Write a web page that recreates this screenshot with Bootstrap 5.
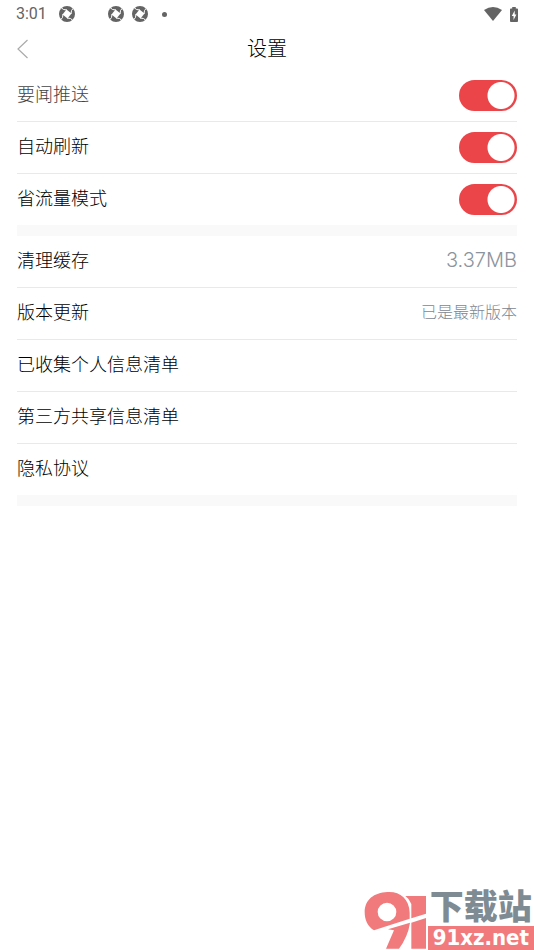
<!DOCTYPE html>
<html lang="zh-CN">
<head>
<meta charset="utf-8">
<meta name="viewport" content="width=device-width, initial-scale=1">
<title>设置</title>
<link href="https://cdn.jsdelivr.net/npm/bootstrap@5.3.0/dist/css/bootstrap.min.css" rel="stylesheet">
<style>
body { font-family: "Noto Sans CJK SC", sans-serif; font-weight: 300; color: #000; background: #fff; }
.page-pad { padding-left: 17px; padding-right: 17px; }
.status-bar { height: 28px; color: #646464; font: 400 16px/28px Roboto, sans-serif; padding: 0 16px; }
.status-bar svg { display: block; }
.notice-first { margin: 0 33px 0 12px; }
.status-dot { width: 5px; height: 5px; border-radius: 50%; background: #646464; margin-left: 14px; }
.title-bar { height: 42px; display: grid; grid-template-columns: 1fr auto 1fr; align-items: center; }
.title-bar h1 { font-size: 20px; line-height: 30px; font-weight: 300; margin: 0; padding-bottom: 2px; color: #000; }
.back-link svg { display: block; }
.setting-row { height: 52px; font-size: 18px; line-height: 28px; border-bottom: 1px solid #e9e9e9; }
.setting-row:last-child { border-bottom: 0; height: 51px; }
.setting-row > label, .setting-row > span { padding-bottom: 6px; }
.setting-row > .size-value { padding-bottom: 4px; }
.setting-group { border-bottom: 11px solid #f9f9f9; margin: 0; padding: 0; }
.row-link { color: #000; }
.muted-label { color: #444; }
.size-value { font: 300 20px/28px Inter, "Liberation Sans", sans-serif; color: #8b949e; }
.version-value { font-size: 16px; color: #7d8791; }
.form-check-input.toggle { width: 58px; height: 31px; margin: 0; border: 0; border-radius: 16px; background-color: #ccc; background-image: radial-gradient(circle at 16px 50%, #fff 13px, transparent 14px); background-position: 0 0; background-size: 100% 100%; }
.form-check-input.toggle:checked { background-color: #eb4549; background-image: radial-gradient(circle at 42px 50%, #fff 13px, transparent 14px); background-position: 0 0; }
.brand-name { font-size: 34px; line-height: 34px; padding-bottom: 4px; font-weight: 900; color: #7e8b93; }
.brand-site { background: #f17a7c; color: #fff; font: 700 22px/24px "DejaVu Sans Condensed", "DejaVu Sans Mono", sans-serif; padding: 0 5px; }
</style>
<script src="https://cdn.jsdelivr.net/npm/bootstrap@5.3.0/dist/js/bootstrap.bundle.min.js"></script>
</head>
<body class="min-vh-100 d-flex flex-column">
<svg class="d-none" aria-hidden="true">
  <symbol id="shutter" viewBox="0 0 16 16">
    <circle cx="8" cy="8" r="8" fill="#646464"/>
    <path d="M7.500 3.500 12.500 7.500 8.500 12.500 3.500 8.500Z" fill="#fff"/>
    <path d="M8 4 4.500 3.500 2 1.500M12 8 12.500 4.500 14.500 2M8 12 11.500 12.500 14 14.500M4 8 3.500 11.500 1.500 14" fill="none" stroke="#fff" stroke-width="1"/>
  </symbol>
</svg>
<header>
  <div class="status-bar d-flex align-items-center">
    <span>3:01</span>
    <svg class="notice-first" width="16" height="16"><use href="#shutter"/></svg>
    <svg width="16" height="16"><use href="#shutter"/></svg>
    <svg class="ms-2" width="16" height="16"><use href="#shutter"/></svg>
    <span class="status-dot"></span>
    <svg class="ms-auto" width="18" height="14" viewBox="0 0 18 14"><path d="M0 3Q9-3 18 3L9 14Z" fill="#646464"/></svg>
    <svg class="ms-2" width="8" height="15" viewBox="0 0 9 15" preserveAspectRatio="none"><path d="M2.500 1.500V0h4v1.500H8q1 0 1 1V14q0 1-1 1H1q-1 0-1-1V2.500q0-1 1-1Z" fill="#646464"/><path d="M5.300 3.500 2 9h2v4l3.200-5.500H5.300Z" fill="#fff"/></svg>
  </div>
  <div class="title-bar page-pad">
    <a href="#" class="back-link" aria-label="返回"><svg width="12" height="20" viewBox="0 0 12 20"><path d="M10.500 1 1 10l9.500 9" fill="none" stroke="#aaa" stroke-width="1.200"/></svg></a>
    <h1>设置</h1>
  </div>
</header>
<main class="page-pad">
  <div class="setting-group">
    <div class="setting-row d-flex align-items-center justify-content-between"><label class="muted-label" for="push">要闻推送</label><input class="form-check-input toggle" type="checkbox" role="switch" id="push" checked></div>
    <div class="setting-row d-flex align-items-center justify-content-between"><label for="refresh">自动刷新</label><input class="form-check-input toggle" type="checkbox" role="switch" id="refresh" checked></div>
    <div class="setting-row d-flex align-items-center justify-content-between"><label for="saver">省流量模式</label><input class="form-check-input toggle" type="checkbox" role="switch" id="saver" checked></div>
  </div>
  <div class="setting-group">
    <a href="#" class="setting-row row-link text-decoration-none d-flex align-items-center justify-content-between"><span>清理缓存</span><span class="size-value">3.37MB</span></a>
    <a href="#" class="setting-row row-link text-decoration-none d-flex align-items-center justify-content-between"><span>版本更新</span><span class="version-value">已是最新版本</span></a>
    <a href="#" class="setting-row row-link text-decoration-none d-flex align-items-center"><span>已收集个人信息清单</span></a>
    <a href="#" class="setting-row row-link text-decoration-none d-flex align-items-center"><span>第三方共享信息清单</span></a>
    <a href="#" class="setting-row row-link text-decoration-none d-flex align-items-center"><span>隐私协议</span></a>
  </div>
</main>
<footer class="mt-auto d-flex justify-content-end align-items-end">
  <svg width="64" height="62" viewBox="0 0 192 186" role="img" aria-label="91">
    <g fill="#f17a7c">
      <path fill-rule="evenodd" d="M70 12C105 9 136 30 137 74V92L60 117 30 127C10 115 2 95 2 72 2 35 30 14 70 12ZM69 44A28 28 0 1 0 69 100 28 28 0 1 0 69 44Z"/>
      <path d="M124 24H186V77L142 91V48Q136 32 124 24Z"/>
      <path d="M72 124 138 104Q132 145 105 182H66L90 127Z"/>
      <path d="M142 104 186 90V182H142Z"/>
    </g>
  </svg>
  <div class="text-center">
    <div class="brand-name">下载站</div>
    <div class="brand-site">91xz.net</div>
  </div>
</footer>
</body>
</html>
